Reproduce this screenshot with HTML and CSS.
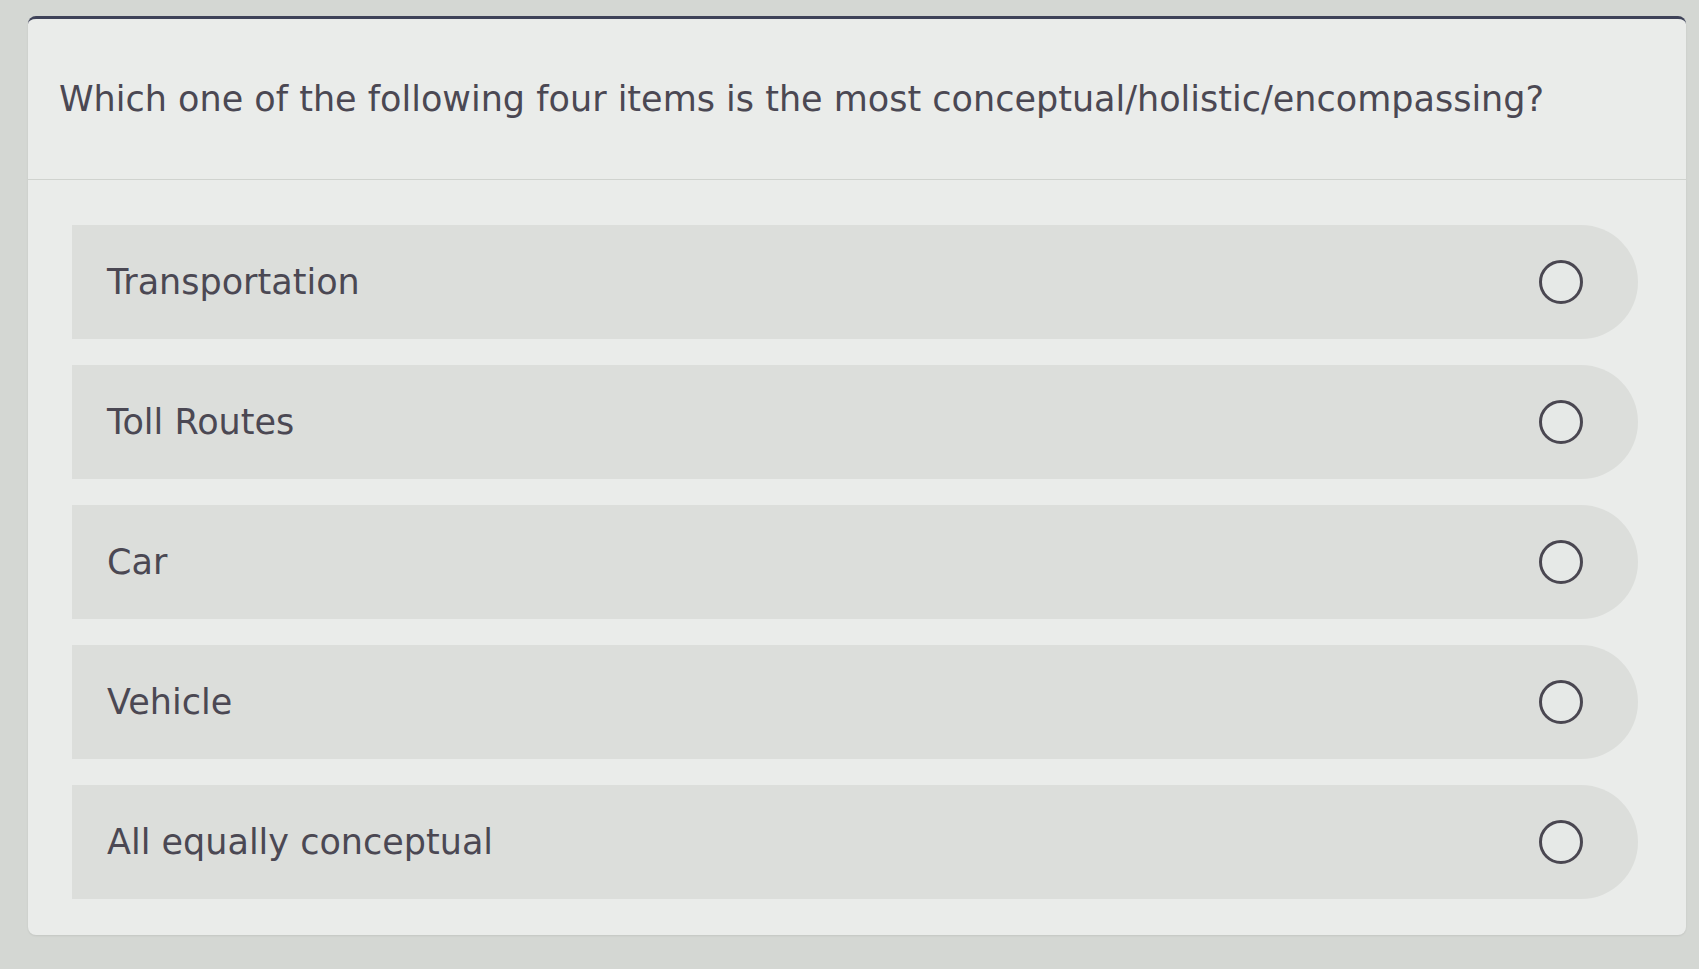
FILE: index.html
```html
<!DOCTYPE html>
<html lang="en">
<head>
<meta charset="utf-8">
<title>Question</title>
<link rel="stylesheet" href="styles.css">
</head>
<body>
<div class="card">
  <div class="card-head">
    <p class="question">Which one of the following four items is the most conceptual/holistic/encompassing?</p>
  </div>
  <div class="options">
    <label class="option"><span class="label">Transportation</span><span class="radio"></span></label>
    <label class="option"><span class="label">Toll Routes</span><span class="radio"></span></label>
    <label class="option"><span class="label">Car</span><span class="radio"></span></label>
    <label class="option"><span class="label">Vehicle</span><span class="radio"></span></label>
    <label class="option"><span class="label">All equally conceptual</span><span class="radio"></span></label>
  </div>
</div>
</body>
</html>
```
FILE: styles.css
```css
html, body {
  margin: 0;
  padding: 0;
}
body {
  background: #d4d7d3;
  font-family: "DejaVu Sans", Verdana, sans-serif;
  color: #4b4853;
  padding: 16px 13px 0 28px;
  height: 969px;
  box-sizing: border-box;
}
.card {
  background: #eaecea;
  border-top: 3px solid #3e4258;
  border-radius: 8px;
  box-shadow: 0 1px 2px rgba(0,0,0,0.08);
}
.card-head {
  height: 160px;
  display: flex;
  align-items: center;
  padding: 0 31px;
  border-bottom: 1px solid #d0d3cf;
}
.question {
  margin: 0;
  font-size: 35px;
}
.options {
  display: flex;
  flex-direction: column;
  gap: 26px;
  padding: 45px 48px 36px 44px;
}
.option {
  height: 114px;
  background: #dcdedb;
  border-radius: 0 57px 57px 0;
  display: flex;
  align-items: center;
  justify-content: space-between;
  padding: 0 55px 0 35px;
}
.label {
  font-size: 35px;
}
.radio {
  width: 44px;
  height: 44px;
  box-sizing: border-box;
  border: 3px solid #4a4751;
  border-radius: 50%;
  background: #e6e9e7;
}
```
